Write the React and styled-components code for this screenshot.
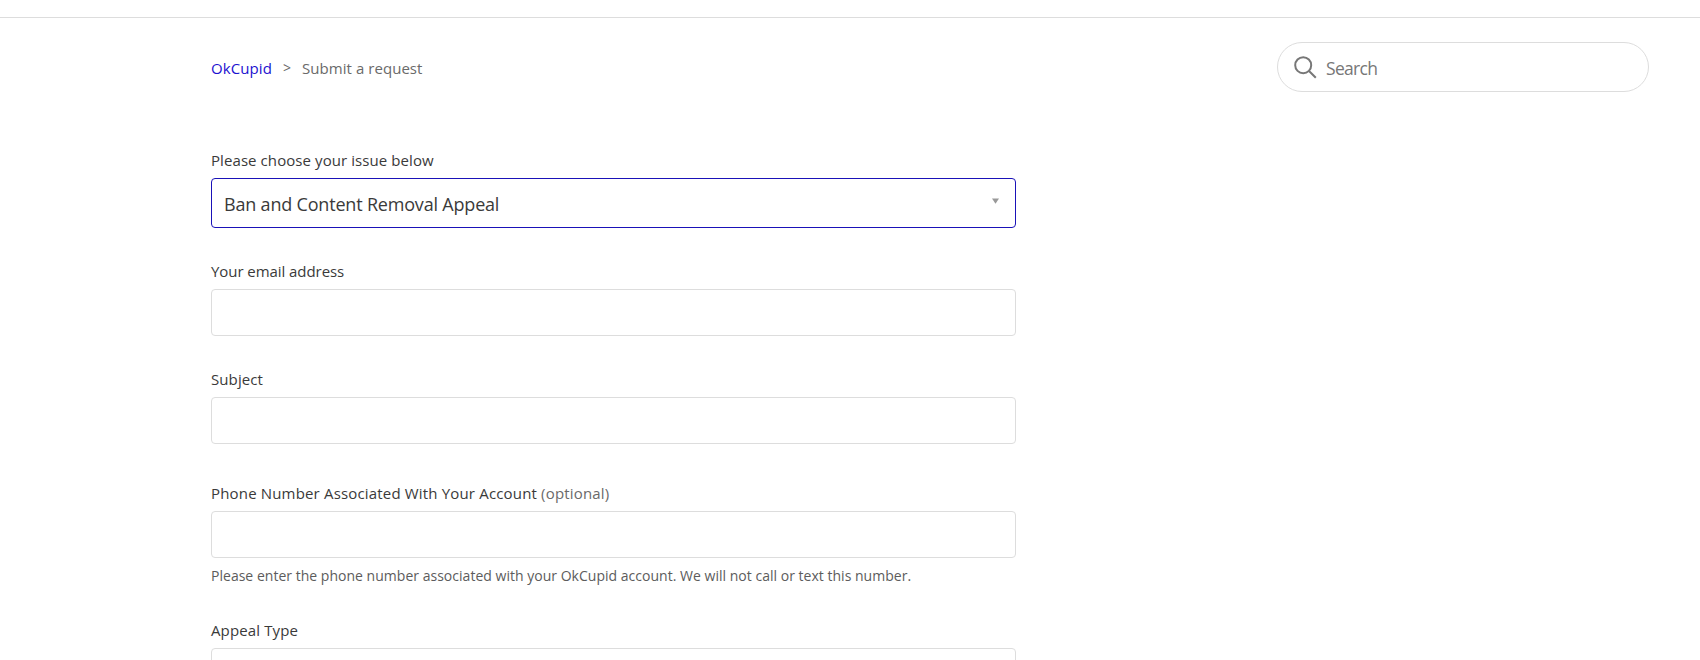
import styled, { createGlobalStyle } from "styled-components";

const GlobalStyle = createGlobalStyle`
  * {
    box-sizing: border-box;
  }
  html, body {
    margin: 0;
    height: 660px;
    overflow: hidden;
    background: #fff;
  }
  body {
    font-family: "Open Sans", "Noto Sans", sans-serif;
    font-size: 15px;
    color: #3a3a3a;
  }
`;
// Wrapper for the whole page
const Page = styled.div`
  height: 660px;
  overflow: hidden;
`;
// Empty strip with the header's bottom border
const HeaderEdge = styled.header`
  height: 18px;
  border-bottom: 1px solid #ddd;
`;
// Row with the breadcrumbs and the search box
const SubNav = styled.div`
  display: flex;
  justify-content: space-between;
  align-items: flex-start;
  padding: 24px 51px 0 211px;
  height: 130px;
`;
// Styled component for the breadcrumbs
const Breadcrumbs = styled.nav`
  display: flex;
  gap: 11px;
  padding-top: 14px;
  line-height: 24px;
  color: #6a6a6a;
`;
const CrumbLink = styled.a`
  color: #1c12d0;
  text-decoration: none;
  letter-spacing: 0.1px;
`;
const Separator = styled.span`
  font-size: 14px;
`;
const Crumb = styled.span`
  letter-spacing: 0.05px;
`;
// Styled component for the search box
const SearchBox = styled.form`
  display: flex;
  align-items: center;
  gap: 10px;
  width: 372px;
  height: 50px;
  padding: 0 16px;
  border: 1px solid #ddd;
  border-radius: 25px;
`;
const SearchIcon = styled.svg`
  width: 23px;
  height: 23px;
  flex: none;
`;
const SearchInput = styled.input`
  flex: 1;
  min-width: 0;
  padding: 2px 0 0;
  margin-left: -1px;
  border: 0;
  outline: 0;
  font: 17.5px "Open Sans", "Noto Sans", sans-serif;
  letter-spacing: -0.7px;
  color: #333;

  &::placeholder {
    color: #777;
    opacity: 1;
  }
`;
// Styled component for the request form
const Form = styled.form`
  width: 805px;
  margin-left: 211px;
`;
// One label with its control and an optional hint
const Field = styled.div`
  display: flex;
  flex-direction: column;
  margin-bottom: ${(props) => props.$gap}px;
`;
const Label = styled.label`
  height: 30px;
  line-height: 24px;
  white-space: nowrap;
  letter-spacing: ${(props) => props.$spacing || "0"};
`;
const Optional = styled.span`
  color: #6a6a6a;
`;
// Styled component for a text input
const Input = styled.input`
  width: 100%;
  height: 47px;
  padding: 0 12px;
  border: 1px solid #ddd;
  border-radius: 4px;
  outline: 0;
`;
// Styled component for the dropdown
const Select = styled.div`
  display: flex;
  justify-content: space-between;
  align-items: center;
  height: ${(props) => (props.$active ? 50 : 47)}px;
  padding: 2px 16px 0 12px;
  border: 1px solid ${(props) => (props.$active ? "#1a12b8" : "#ddd")};
  border-radius: 4px;
  font-size: 18px;
  letter-spacing: -0.19px;
`;
const Arrow = styled.svg`
  width: 7px;
  height: 6px;
  margin-bottom: 7px;
`;
const Hint = styled.p`
  margin: 7px 0 0;
  font-size: 14px;
  line-height: 22px;
  white-space: nowrap;
  letter-spacing: 0.02px;
  color: #5c5c5c;
`;

const App = () => {
  return (
    <Page>
      <GlobalStyle />
      <HeaderEdge />
      <SubNav>
        <Breadcrumbs>
          <CrumbLink>OkCupid</CrumbLink>
          <Separator>&gt;</Separator>
          <Crumb>Submit a request</Crumb>
        </Breadcrumbs>
        <SearchBox>
          <SearchIcon viewBox="0 0 23 23" fill="none" stroke="#777" strokeWidth="2">
            <circle cx="9.2" cy="9.2" r="8" />
            <path d="M15 15l6.8 6.8" />
          </SearchIcon>
          <SearchInput type="search" placeholder="Search" />
        </SearchBox>
      </SubNav>

      <Form>
        <Field $gap={31}>
          <Label $spacing="0.08px">Please choose your issue below</Label>
          <Select $active>
            Ban and Content Removal Appeal
            <Arrow viewBox="0 0 7 6">
              <path d="M0 0.5h7L3.5 5.8z" fill="#999" />
            </Arrow>
          </Select>
        </Field>
        <Field $gap={31}>
          <Label $spacing="-0.06px">Your email address</Label>
          <Input type="text" />
        </Field>
        <Field $gap={37}>
          <Label $spacing="0.1px">Subject</Label>
          <Input type="text" />
        </Field>
        <Field $gap={31}>
          <Label $spacing="0.17px">
            Phone Number Associated With Your Account <Optional>(optional)</Optional>
          </Label>
          <Input type="text" />
          <Hint>
            Please enter the phone number associated with your OkCupid account. We will not call or text this number.
          </Hint>
        </Field>
        <Field $gap={0}>
          <Label $spacing="0.13px">Appeal Type</Label>
          <Select />
        </Field>
      </Form>
    </Page>
  );
};

export default App;
